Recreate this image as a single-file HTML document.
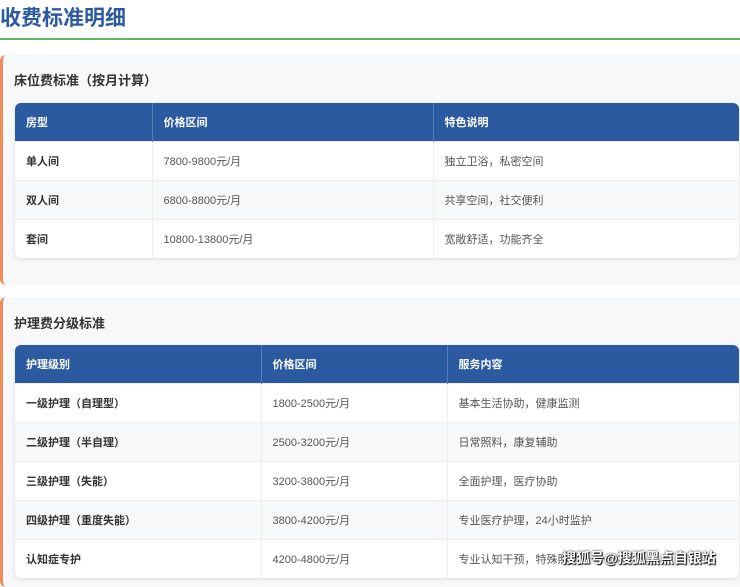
<!DOCTYPE html>
<html><head><meta charset="utf-8"><style>
*{margin:0;padding:0;box-sizing:border-box}
body{width:740px;height:575px;overflow:hidden;background:#fff;font-family:"Liberation Sans","Noto Sans CJK SC",sans-serif;position:relative}
h1{position:absolute;left:0;top:2px;font-size:21px;color:#2b5aa0;font-weight:bold;letter-spacing:0px}
.line{position:absolute;left:0;top:38px;width:740px;height:2px;background:#5cb85c}
.card{position:absolute;left:0;width:740px;background:#f7f8fa;border-left:3px solid #f08c5a;border-radius:6px 0 0 6px}
.card h2{position:absolute;left:11px;font-size:13px;font-weight:bold;color:#333}
table{position:absolute;left:15px;width:724px;border-collapse:collapse;background:#fff;border-radius:6px;overflow:hidden;box-shadow:0 1px 4px rgba(0,0,0,.12);font-size:11px}
th{background:#2b5aa0;color:#fff;text-align:left;height:38px;padding-left:11px;font-weight:bold;border-right:1px solid #5a7fbf}
td{height:39px;padding-left:11px;color:#555;border-right:1px solid #eee;border-top:1px solid #eee;background:#fff}
td:first-child{color:#333;font-weight:bold}
tr:nth-child(odd) td{background:#f7f8fa}
th:last-child,td:last-child{border-right:none}
.wm{position:absolute;left:562px;top:548px;font-size:14px;color:#fff;font-weight:bold;text-shadow:0 0 2px #000,1px 1px 1px #000}
</style></head><body>
<h1>收费标准明细</h1>
<div class="line"></div>
<div class="card" style="top:55px;height:230px">
<h2 style="top:15px">床位费标准（按月计算）</h2>
</div>
<table style="top:103px">
<tr><th style="width:137px">房型</th><th style="width:281px">价格区间</th><th>特色说明</th></tr>
<tr><td>单人间</td><td>7800-9800元/月</td><td>独立卫浴，私密空间</td></tr>
<tr><td>双人间</td><td>6800-8800元/月</td><td>共享空间，社交便利</td></tr>
<tr><td>套间</td><td>10800-13800元/月</td><td>宽敞舒适，功能齐全</td></tr>
</table>
<div class="card" style="top:297px;height:290px">
<h2 style="top:16px">护理费分级标准</h2>
</div>
<table style="top:345px">
<tr><th style="width:246px">护理级别</th><th style="width:186px">价格区间</th><th>服务内容</th></tr>
<tr><td>一级护理（自理型）</td><td>1800-2500元/月</td><td>基本生活协助，健康监测</td></tr>
<tr><td>二级护理（半自理）</td><td>2500-3200元/月</td><td>日常照料，康复辅助</td></tr>
<tr><td>三级护理（失能）</td><td>3200-3800元/月</td><td>全面护理，医疗协助</td></tr>
<tr><td>四级护理（重度失能）</td><td>3800-4200元/月</td><td>专业医疗护理，24小时监护</td></tr>
<tr><td>认知症专护</td><td>4200-4800元/月</td><td>专业认知干预，特殊照护</td></tr>
</table>
<div class="wm">搜狐号@搜狐黑点自银站</div>
</body></html>
